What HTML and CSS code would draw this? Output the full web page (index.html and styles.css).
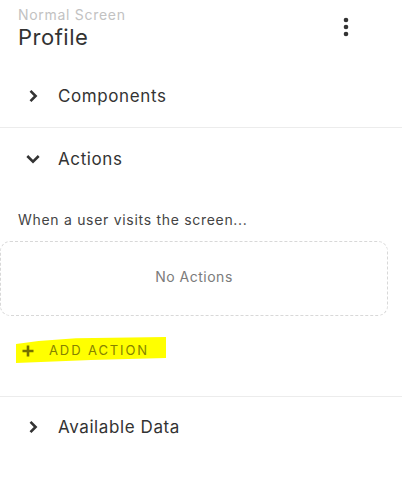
FILE: index.html
```html
<!DOCTYPE html>
<html>
<head>
<meta charset="utf-8">
<link rel="stylesheet" href="styles.css">
</head>
<body>
<div class="panel">
  <header class="header">
    <div class="titles">
      <div class="subtitle">Normal Screen</div>
      <div class="title">Profile</div>
    </div>
    <div class="kebab">
      <svg width="6" height="20" viewBox="0 0 6 20"><circle cx="3" cy="3" r="2.3" fill="#333"/><circle cx="3" cy="10" r="2.3" fill="#333"/><circle cx="3" cy="17" r="2.3" fill="#333"/></svg>
    </div>
  </header>

  <section class="section first">
    <div class="row">
      <svg class="chev" width="14" height="14" viewBox="0 0 14 14"><path d="M4.5 1.8 L9.6 7 L4.5 12.2" fill="none" stroke="#333" stroke-width="2.6"/></svg>
      <span class="label">Components</span>
    </div>
  </section>

  <section class="section open">
    <div class="row">
      <svg class="chev" width="14" height="14" viewBox="0 0 14 14"><path d="M1.3 4 L7 9.6 L12.7 4" fill="none" stroke="#333" stroke-width="2.6"/></svg>
      <span class="label">Actions</span>
    </div>
    <div class="content">
      <p class="desc">When a user visits the screen...</p>
      <div class="empty">No Actions</div>
      <div class="add">
        <svg class="plus" width="12" height="12" viewBox="0 0 12 12"><path d="M6 0.5 V11.5 M0.5 6 H11.5" stroke="#747100" stroke-width="2.6" fill="none"/></svg>
        <span class="add-text">ADD ACTION</span>
      </div>
    </div>
  </section>

  <section class="section last">
    <div class="row">
      <svg class="chev" width="14" height="14" viewBox="0 0 14 14"><path d="M4.5 1.8 L9.6 7 L4.5 12.2" fill="none" stroke="#333" stroke-width="2.6"/></svg>
      <span class="label">Available Data</span>
    </div>
  </section>
</div>
</body>
</html>
```

FILE: styles.css
```css
* { box-sizing: border-box; }
html, body { margin: 0; padding: 0; background: #fff; }
body {
  font-family: Inter, "Noto Sans", sans-serif;
  color: #333;
  width: 402px;
  height: 484px;
  overflow: hidden;
}
.panel { display: flex; flex-direction: column; }

.header {
  display: flex;
  justify-content: space-between;
  align-items: flex-start;
  padding: 6px 0 0 18px;
  height: 64px;
}
.subtitle {
  font-size: 14px;
  line-height: 18px;
  color: #c2c2c2;
  letter-spacing: 0.7px;
}
.title {
  font-size: 22px;
  line-height: 26px;
  color: #333;
  letter-spacing: 0.5px;
}
.kebab {
  padding-top: 11px;
  margin-right: 53px;
  display: flex;
}

.section { border-bottom: 1px solid #ececec; }
.section.last { border-bottom: none; }
.row {
  display: flex;
  align-items: center;
  height: 61px;
  padding-left: 26px;
}
.section.first .row { height: 63px; }
.section.last .row { height: 62px; padding-bottom: 2px; }
.chev { flex: none; margin-right: 18px; }
.label {
  font-size: 17px;
  color: #333;
  letter-spacing: 0.6px;
}

.content { padding-bottom: 33px; }
.desc {
  margin: 21px 0 0 18px;
  font-size: 14px;
  line-height: 20px;
  color: #444;
  letter-spacing: 0.7px;
}
.empty {
  margin-top: 11px;
  width: 388px;
  height: 75px;
  padding-bottom: 4px;
  border: 1px dashed #d8d8d8;
  border-radius: 10px;
  display: flex;
  align-items: center;
  justify-content: center;
  font-size: 14px;
  color: #7b7b7b;
  letter-spacing: 0.5px;
}
.add {
  position: relative;
  margin: 21px 0 0 16px;
  width: 150px;
  height: 26px;
  display: flex;
  align-items: center;
  padding-left: 6px;
}
.add::before {
  content: "";
  position: absolute;
  inset: 0;
  background: #ffff00;
  clip-path: polygon(0 27%, 15% 15%, 40% 5%, 100% 0, 100% 81%, 50% 88%, 0 100%);
  z-index: 0;
}
.plus, .add-text { position: relative; z-index: 1; }
.plus { flex: none; margin-right: 15px; margin-top: 2px; }
.add-text {
  color: #858200;
  font-size: 13px;
  letter-spacing: 1.9px;
  font-weight: 400;
}
```
